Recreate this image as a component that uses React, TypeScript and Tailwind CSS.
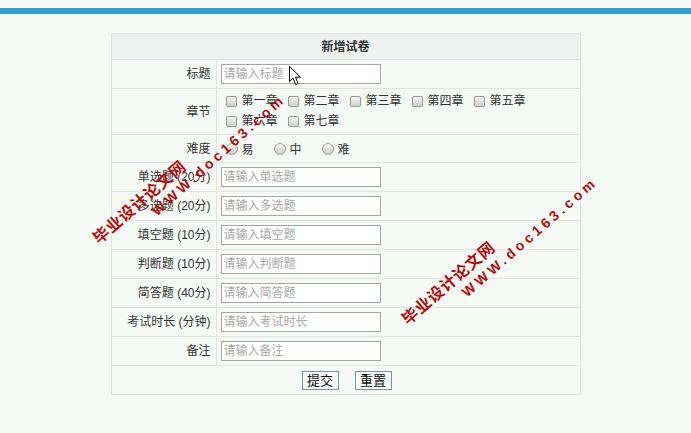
import React from "react";

const fields = [
  { label: "单选题 (20分)", ph: "请输入单选题" },
  { label: "多选题 (20分)", ph: "请输入多选题" },
  { label: "填空题 (10分)", ph: "请输入填空题" },
  { label: "判断题 (10分)", ph: "请输入判断题" },
  { label: "简答题 (40分)", ph: "请输入简答题" },
  { label: "考试时长 (分钟)", ph: "请输入考试时长" },
  { label: "备注", ph: "请输入备注" },
];

const chapters = ["第一章", "第二章", "第三章", "第四章", "第五章", "第六章", "第七章"];

function Box() {
  return (
    <span className="inline-block w-[11px] h-[11px] rounded-[2px] border border-[#9a9a9a] bg-gradient-to-b from-[#f4f4f4] to-[#cfcfcf] mr-[5px] shrink-0" />
  );
}

function Radio() {
  return (
    <span className="inline-block w-[12px] h-[12px] rounded-full border border-[#a0a0a0] bg-gradient-to-b from-[#f6f6f6] to-[#cdcdcd] mr-[4px] shrink-0" />
  );
}

function Field({ ph }: { ph: string }) {
  return (
    <input
      placeholder={ph}
      className="w-[160px] h-[20px] border border-[#a6a6a6] bg-white px-[2px] text-[12px] text-[#333] outline-none placeholder:text-[#a9a9a9] block"
    />
  );
}

export default function App() {
  const label = "text-right pr-[5px] text-[#333] border border-[#e1e4e1] w-[105px]";
  const cell = "pl-[4px] border border-[#e1e4e1]";
  return (
    <div
      className="relative w-full h-[433px] bg-[#f6faf7] overflow-hidden text-[12px]"
      style={{ fontFamily: '"Liberation Sans", "Noto Sans CJK SC", sans-serif' }}
    >
      <div className="h-[8px]" />
      <div className="h-[6px] bg-[#369fc8]" />

      <table className="w-[470px] mx-auto mt-[19px] border border-[#dcdfdc]">
        <tbody>
          <tr className="h-[26px] bg-[#eef1ef]">
            <td colSpan={2} className="text-center font-bold text-[#333] border border-[#e1e4e1]">
              新增试卷
            </td>
          </tr>
          <tr className="h-[29px]">
            <td className={label}>标题</td>
            <td className={cell}>
              <Field ph="请输入标题" />
            </td>
          </tr>
          <tr className="h-[46px]">
            <td className={label}>章节</td>
            <td className={cell + " pt-[2px] pb-[3px]"}>
              <div className="flex flex-wrap pl-[5px] w-[350px]">
                {chapters.map((c) => (
                  <label key={c} className="flex items-center h-[20px] mr-[9px] text-[#333]">
                    <Box />
                    <span className="w-[37px]">{c}</span>
                  </label>
                ))}
              </div>
            </td>
          </tr>
          <tr className="h-[28px]">
            <td className={label}>难度</td>
            <td className={cell}>
              <div className="flex items-center pl-[5px] text-[#333]">
                {["易", "中", "难"].map((d) => (
                  <label key={d} className="flex items-center mr-[20px]">
                    <Radio />
                    <span className="mt-[2px]">{d}</span>
                  </label>
                ))}
              </div>
            </td>
          </tr>
          {fields.map((f) => (
            <tr key={f.label} className="h-[29px]">
              <td className={label}>{f.label}</td>
              <td className={cell}>
                <Field ph={f.ph} />
              </td>
            </tr>
          ))}
          <tr className="h-[29px]">
            <td colSpan={2} className="border border-[#e1e4e1]">
              <div className="flex justify-center gap-[16px] pl-[2px]">
                <button className="w-[37px] h-[19px] border border-[#7f93a8] bg-[#f8fafa] text-[13px] leading-none text-[#111]">
                  提交
                </button>
                <button className="w-[37px] h-[19px] border border-[#7f93a8] bg-[#f8fafa] text-[13px] leading-none text-[#111]">
                  重置
                </button>
              </div>
            </td>
          </tr>
        </tbody>
      </table>

      {/* watermark overlays */}
      <div className="absolute left-[101px] top-[230px] origin-bottom-left -rotate-[41deg] whitespace-nowrap text-[16px] leading-[17px] font-bold tracking-[0.7px] text-[#b50d0d]">
        毕业设计论文网
      </div>
      <div className="absolute left-[159px] top-[204px] origin-bottom-left -rotate-[42deg] whitespace-nowrap text-[14px] leading-[15px] font-bold tracking-[3.6px] text-[#b50d0d]">
        WWW.doc163.com
      </div>
      <div className="absolute left-[410px] top-[311px] origin-bottom-left -rotate-[41deg] whitespace-nowrap text-[16px] leading-[17px] font-bold tracking-[0.7px] text-[#b50d0d]">
        毕业设计论文网
      </div>
      <div className="absolute left-[469px] top-[285px] origin-bottom-left -rotate-[41deg] whitespace-nowrap text-[14px] leading-[15px] font-bold tracking-[3.6px] text-[#b50d0d]">
        WWW.doc163.com
      </div>

      {/* mouse pointer */}
      <svg className="absolute left-[289px] top-[66px]" width="13" height="20" viewBox="0 0 13 20">
        <path
          d="M0.5 0.5 L0.5 15.5 L4 12 L6.5 18.5 L9 17.5 L6.5 11.2 L11.5 11.2 Z"
          fill="#fff"
          stroke="#000"
          strokeWidth="1"
          strokeLinejoin="round"
        />
      </svg>
    </div>
  );
}
